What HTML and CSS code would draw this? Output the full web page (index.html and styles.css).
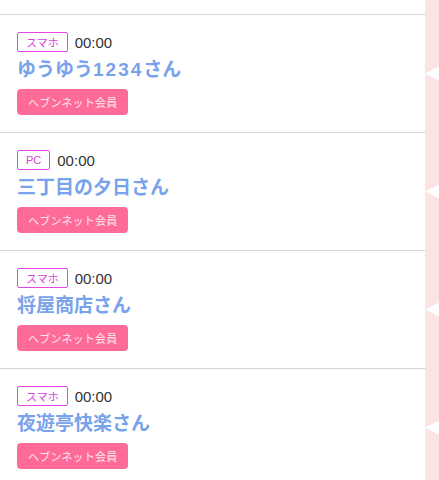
FILE: index.html
```html
<!DOCTYPE html>
<html lang="ja">
<head>
  <meta charset="UTF-8" />
  <meta name="viewport" content="width=device-width, initial-scale=1.0"/>
  <title>ヘブンネット会員</title>
  <link rel="stylesheet" href="styles.css">
</head>
<body>
  <div class="screen">
    <div class="list">
      <div class="list-top"></div>

      <div class="item">
        <div class="meta">
          <span class="device">スマホ</span>
          <span class="time">00:00</span>
        </div>
        <div class="name">ゆうゆう<span class="num">1234</span>さん</div>
        <div class="member">ヘブンネット会員</div>
      </div>

      <div class="item">
        <div class="meta">
          <span class="device">PC</span>
          <span class="time">00:00</span>
        </div>
        <div class="name">三丁目の夕日さん</div>
        <div class="member">ヘブンネット会員</div>
      </div>

      <div class="item">
        <div class="meta">
          <span class="device">スマホ</span>
          <span class="time">00:00</span>
        </div>
        <div class="name">将屋商店さん</div>
        <div class="member">ヘブンネット会員</div>
      </div>

      <div class="item">
        <div class="meta">
          <span class="device">スマホ</span>
          <span class="time">00:00</span>
        </div>
        <div class="name">夜遊亭快楽さん</div>
        <div class="member">ヘブンネット会員</div>
      </div>
    </div>
  </div>
</body>
</html>
```

FILE: styles.css
```css
* {
  margin: 0;
  padding: 0;
  box-sizing: border-box;
  font-family: "Liberation Sans", "Noto Sans CJK JP", sans-serif;
}

html, body {
  width: 100%;
  height: 100%;
  overflow: hidden;
  background-color: white;
}

.screen {
  height: 480px;
  background-color: #fde3e4;
  overflow: hidden;
}

.list {
  margin-right: 14px;
  min-height: 100%;
  background-color: white;
}

.list-top {
  height: 14px;
}

.item {
  position: relative;
  border-top: 1px solid #d4d4d4;
  padding: 17px 17px 17px;
}

.item::after {
  content: '';
  position: absolute;
  top: 50%;
  right: -14px;
  width: 14px;
  height: 14px;
  margin-top: -7px;
  background-color: white;
  clip-path: polygon(0 50%, 100% 0, 100% 100%);
}

.meta {
  display: flex;
  align-items: center;
  gap: 7px;
  height: 20px;
}

.device {
  display: flex;
  align-items: center;
  height: 20px;
  padding: 0 8px;
  border: 1px solid #e447e6;
  border-radius: 2px;
  color: #d93fdb;
  font-size: 11px;
}

.time {
  font-size: 15px;
  color: #333;
}

.name {
  margin-top: 4px;
  line-height: 28px;
  font-size: 19px;
  font-weight: bold;
  color: #78a3ec;
}

.num {
  letter-spacing: 2px;
}

.member {
  display: inline-flex;
  align-items: center;
  height: 26px;
  margin-top: 5px;
  padding: 0 11px;
  border-radius: 4px;
  background-color: #ff6b98;
  color: #fde8ef;
  font-size: 11px;
  letter-spacing: 0.2px;
}
```
